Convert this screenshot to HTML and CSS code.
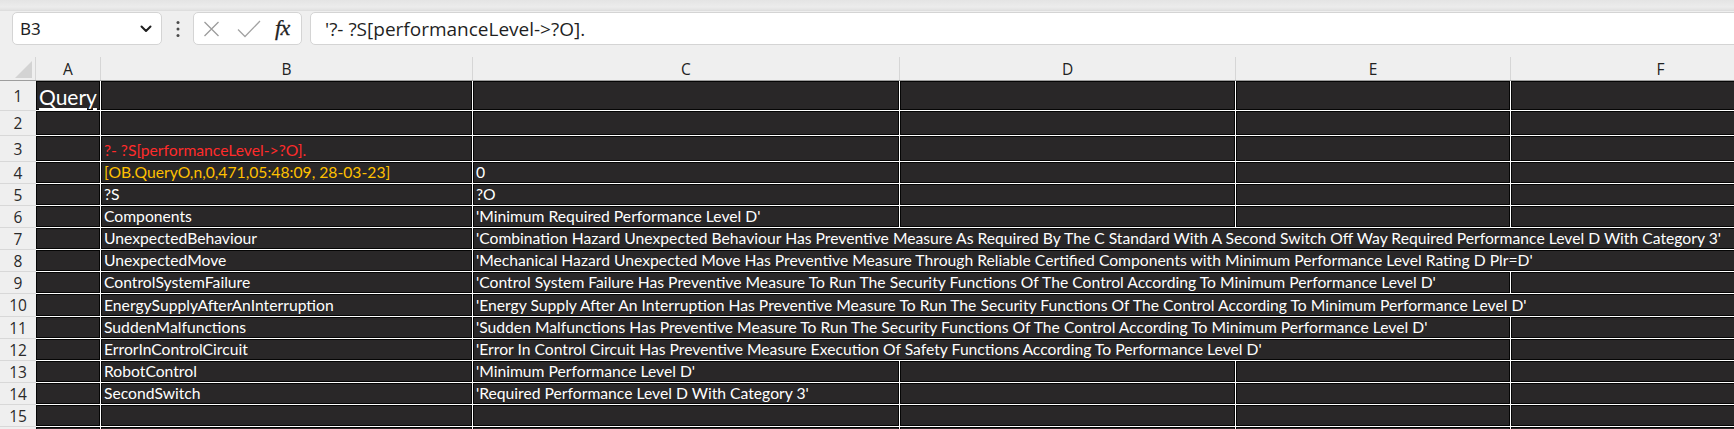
FILE: index.html
```html
<!DOCTYPE html>
<html>
<head>
<meta charset="utf-8">
<link rel="stylesheet" href="styles.css">
</head>
<body>
<div class="app">
  <div class="topstrip"></div>
  <div class="fbar">
    <div class="namebox">
      <span class="nbtext">B3</span>
      <svg class="chev" width="12" height="8" viewBox="0 0 12 8"><path d="M1.5 1.5 L6 6 L10.5 1.5" fill="none" stroke="#1f1f1f" stroke-width="2" stroke-linecap="round" stroke-linejoin="round"/></svg>
    </div>
    <div class="dots">
      <svg width="6" height="18" viewBox="0 0 6 18"><circle cx="3" cy="2.5" r="1.5" fill="#4a4a4a"/><circle cx="3" cy="9" r="1.5" fill="#4a4a4a"/><circle cx="3" cy="15.5" r="1.5" fill="#4a4a4a"/></svg>
    </div>
    <div class="fxbox">
      <svg class="xicon" width="17" height="16" viewBox="0 0 17 16"><path d="M1.5 1 L15.5 15 M15.5 1 L1.5 15" stroke="#9c9c9c" stroke-width="1.3" fill="none"/></svg>
      <svg class="chk" width="24" height="18" viewBox="0 0 24 18"><path d="M1 9.5 L8 16.5 L23 1" stroke="#a3a3a3" stroke-width="1.3" fill="none"/></svg>
      <span class="fx">fx</span>
    </div>
    <div class="formula">'?- ?S[performanceLevel-&gt;?O].</div>
  </div>

  <div class="colhdr">
    <div class="corner"><svg width="17" height="17" viewBox="0 0 17 17"><path d="M17 0 L17 17 L0 17 Z" fill="#d3d3d3"/></svg></div>
    <div class="ch">A</div>
    <div class="ch">B</div>
    <div class="ch">C</div>
    <div class="ch">D</div>
    <div class="ch">E</div>
    <div class="ch">F</div>
  </div>

  <div class="grid">
    <div class="rh">1</div><div class="c query">Query</div><div class="c"></div><div class="c"></div><div class="c"></div><div class="c"></div><div class="c"></div>
    <div class="rh">2</div><div class="c"></div><div class="c"></div><div class="c"></div><div class="c"></div><div class="c"></div><div class="c"></div>
    <div class="rh">3</div><div class="c"></div><div class="c red">?- ?S[performanceLevel-&gt;?O].</div><div class="c"></div><div class="c"></div><div class="c"></div><div class="c"></div>
    <div class="rh">4</div><div class="c"></div><div class="c gold">[OB.QueryO,n,0,471,05:48:09, 28-03-23]</div><div class="c">0</div><div class="c"></div><div class="c"></div><div class="c"></div>
    <div class="rh">5</div><div class="c"></div><div class="c">?S</div><div class="c">?O</div><div class="c"></div><div class="c"></div><div class="c"></div>
    <div class="rh">6</div><div class="c"></div><div class="c">Components</div><div class="c">'Minimum Required Performance Level D'</div><div class="c"></div><div class="c"></div><div class="c"></div>
    <div class="rh">7</div><div class="c"></div><div class="c">UnexpectedBehaviour</div><div class="c span4">'Combination Hazard Unexpected Behaviour Has Preventive Measure As Required By The C Standard With A Second Switch Off Way Required Performance Level D With Category 3'</div>
    <div class="rh">8</div><div class="c"></div><div class="c">UnexpectedMove</div><div class="c span4">'Mechanical Hazard Unexpected Move Has Preventive Measure Through Reliable Certified Components with Minimum Performance Level Rating D Plr=D'</div>
    <div class="rh">9</div><div class="c"></div><div class="c">ControlSystemFailure</div><div class="c span3">'Control System Failure Has Preventive Measure To Run The Security Functions Of The Control According To Minimum Performance Level D'</div><div class="c"></div>
    <div class="rh">10</div><div class="c"></div><div class="c">EnergySupplyAfterAnInterruption</div><div class="c span4">'Energy Supply After An Interruption Has Preventive Measure To Run The Security Functions Of The Control According To Minimum Performance Level D'</div>
    <div class="rh">11</div><div class="c"></div><div class="c">SuddenMalfunctions</div><div class="c span3">'Sudden Malfunctions Has Preventive Measure To Run The Security Functions Of The Control According To Minimum Performance Level D'</div><div class="c"></div>
    <div class="rh">12</div><div class="c"></div><div class="c">ErrorInControlCircuit</div><div class="c span3">'Error In Control Circuit Has Preventive Measure Execution Of Safety Functions According To Performance Level D'</div><div class="c"></div>
    <div class="rh">13</div><div class="c"></div><div class="c">RobotControl</div><div class="c">'Minimum Performance Level D'</div><div class="c"></div><div class="c"></div><div class="c"></div>
    <div class="rh">14</div><div class="c"></div><div class="c">SecondSwitch</div><div class="c">'Required Performance Level D With Category 3'</div><div class="c"></div><div class="c"></div><div class="c"></div>
    <div class="rh">15</div><div class="c"></div><div class="c"></div><div class="c"></div><div class="c"></div><div class="c"></div><div class="c"></div>
    <div class="rh"></div><div class="c"></div><div class="c"></div><div class="c"></div><div class="c"></div><div class="c"></div><div class="c"></div>
  </div>
</div>
</body>
</html>
```

FILE: styles.css
```css
* { box-sizing: border-box; }
html, body { margin: 0; padding: 0; }
body { background: #efefef; overflow: hidden; }

.app {
  width: 1734px;
  height: 429px;
  overflow: hidden;
  background: #efefef;
}

.topstrip {
  height: 11px;
  background: linear-gradient(#e4e4e4, #ececec 70%, #e2e2e2);
  border-bottom: 1px solid #dedede;
}

.fbar {
  display: flex;
  align-items: stretch;
  height: 34px;
  padding-top: 1px;
  padding-left: 12px;
}

.namebox {
  width: 150px;
  height: 33px;
  background: #fff;
  border: 1px solid #d4d4d4;
  border-radius: 5px;
  display: flex;
  align-items: center;
  justify-content: space-between;
  padding: 0 9px 0 7px;
}
.nbtext {
  font-family: "Noto Sans", "Open Sans", sans-serif;
  font-size: 17px;
  color: #1f1f1f;
}
.chev { margin-top: 1px; }

.dots {
  width: 31px;
  display: flex;
  align-items: center;
  justify-content: center;
}

.fxbox {
  width: 109px;
  height: 33px;
  background: #fff;
  border: 1px solid #d4d4d4;
  border-radius: 5px;
  display: flex;
  align-items: center;
  padding-left: 9px;
}
.xicon { margin-right: 17px; }
.chk { margin-right: 14px; }
.fx {
  font-family: "Liberation Serif", serif;
  font-style: italic;
  font-size: 22px;
  color: #222;
  letter-spacing: -0.5px;
  margin-top: -2px;
  -webkit-text-stroke: 0.3px #222;
}

.formula {
  flex: 1;
  margin-left: 8px;
  margin-right: -20px;
  height: 33px;
  background: #fff;
  border: 1px solid #d4d4d4;
  border-radius: 5px;
  display: flex;
  align-items: center;
  padding-left: 14px;
  font-family: "Open Sans", "Noto Sans", sans-serif;
  font-size: 19px;
  color: #1f1f1f;
  white-space: nowrap;
}

.colhdr, .grid {
  display: grid;
  grid-template-columns: 36px 65px 372px 427px 336px 275px 300px;
}

.colhdr {
  padding-top: 12px;
  height: 36px;
  border-bottom: 1px solid #9d9d9d;
}
.corner {
  display: flex;
  align-items: flex-end;
  justify-content: flex-end;
  padding: 0 3px 2px 0;
  border-right: 1px solid #d6d6d6;
}
.ch {
  border-right: 1px solid #d6d6d6;
  display: flex;
  align-items: center;
  justify-content: center;
  font-family: "Open Sans", "Noto Sans", sans-serif;
  font-size: 15.5px;
  color: #222;
  padding-top: 1px;
}

.grid {
  grid-template-rows: 30px 25px 26px 22px 22px 22px 22px 22px 22px 23px 22px 22px 22px 22px 22px 22px;
}

.rh {
  background: #efefef;
  border-bottom: 1px solid #d8d8d8;
  display: flex;
  align-items: center;
  justify-content: center;
  font-family: "Open Sans", "Noto Sans", sans-serif;
  font-size: 15.5px;
  color: #2a2a2a;
}

.c {
  background: #292728;
  border-right: 1px solid #ffffff;
  border-bottom: 1px solid #ffffff;
  box-shadow: inset 0 0 0 1px #050505;
  color: #ffffff;
  font-family: Lato, "Liberation Sans", sans-serif;
  font-size: 15.7px;
  line-height: 18px;
  white-space: nowrap;
  display: flex;
  align-items: flex-end;
  padding: 0 3px 2px 3px;
  overflow: visible;
  min-width: 0;
}

.span3 { grid-column: span 3; }
.span4 { grid-column: span 4; }

.red { color: #ff2b2b; }
.gold { color: #ffc000; }

.query {
  font-size: 21px;
  line-height: 24px;
  text-decoration: underline;
  text-underline-offset: 3px;
  text-decoration-thickness: 1.5px;
  padding-left: 3px;
  padding-bottom: 1px;
}
```
